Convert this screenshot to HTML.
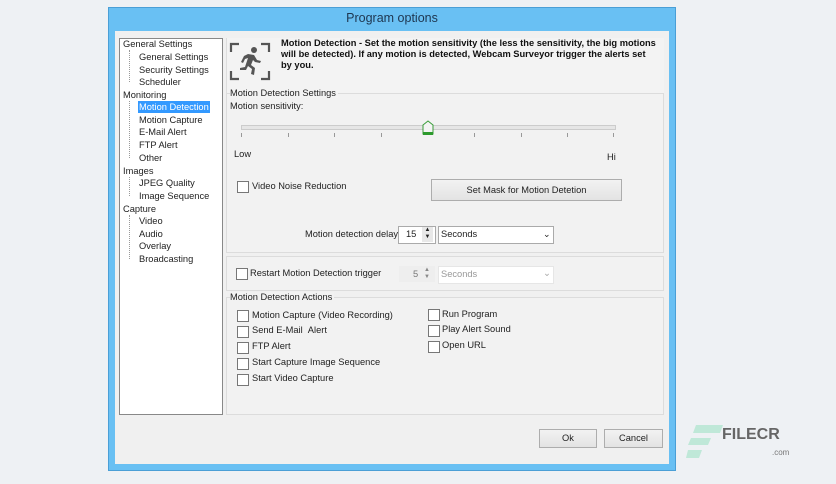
<!DOCTYPE html>
<html><head><meta charset="utf-8"><style>
body{margin:0;width:836px;height:484px;background:#eef1f4;position:relative;overflow:hidden;font-family:"Liberation Sans",sans-serif;font-size:9.3px;color:#222}
.a{position:absolute;white-space:nowrap}
.cb{position:absolute;width:10px;height:10px;border:1px solid #777;background:#fff}
.box{position:absolute;border:1px solid #dcdcdc;background:#f2f2f2}
.btn{position:absolute;border:1px solid #adadad;background:linear-gradient(#f2f2f2,#e3e3e3);text-align:center}
.tick{position:absolute;width:1px;height:4px;background:#999;top:133px}
</style></head><body>
<div class="a" style="left:108px;top:7px;width:568px;height:464px;background:#69c0f3;border:1px solid #4a9fd6;box-sizing:border-box"></div>
<div class="a" style="left:108px;top:11px;width:568px;text-align:center;font-size:12.5px;color:#1e3650">Program options</div>
<div class="a" style="left:115px;top:31px;width:554px;height:433px;background:#f0f0f0"></div>
<!-- tree -->
<div class="a" style="left:119px;top:38px;width:104px;height:377px;background:#fff;border:1px solid #888;box-sizing:border-box"></div>
<div class="a" style="left:129px;top:50px;width:1px;height:32px;border-left:1px dotted #999"></div>
<div class="a" style="left:129px;top:101px;width:1px;height:57px;border-left:1px dotted #999"></div>
<div class="a" style="left:129px;top:177px;width:1px;height:19px;border-left:1px dotted #999"></div>
<div class="a" style="left:129px;top:215px;width:1px;height:44px;border-left:1px dotted #999"></div>
<div>
<div class="a" style="left:123px;top:39px">General Settings</div>
<div class="a" style="left:139px;top:52px">General Settings</div>
<div class="a" style="left:139px;top:65px">Security Settings</div>
<div class="a" style="left:139px;top:77px">Scheduler</div>
<div class="a" style="left:123px;top:90px">Monitoring</div>
<div class="a" style="left:138px;top:101px;background:#3399ff;color:#fff;padding:1px 1px;">Motion Detection</div>
<div class="a" style="left:139px;top:115px">Motion Capture</div>
<div class="a" style="left:139px;top:127px">E-Mail Alert</div>
<div class="a" style="left:139px;top:140px">FTP Alert</div>
<div class="a" style="left:139px;top:153px">Other</div>
<div class="a" style="left:123px;top:166px">Images</div>
<div class="a" style="left:139px;top:178px">JPEG Quality</div>
<div class="a" style="left:139px;top:191px">Image Sequence</div>
<div class="a" style="left:123px;top:204px">Capture</div>
<div class="a" style="left:139px;top:216px">Video</div>
<div class="a" style="left:139px;top:229px">Audio</div>
<div class="a" style="left:139px;top:241px">Overlay</div>
<div class="a" style="left:139px;top:254px">Broadcasting</div>
</div>
<!-- header -->
<div class="a" style="left:226px;top:38px;width:437px;height:212px;background:#f3f3f3;border-left:1px solid #ddd"></div>
<svg class="a" style="left:229px;top:41px" width="44" height="42" viewBox="0 0 44 42" fill="none" stroke="#555" stroke-width="2.2">
<path d="M2 11V3h8M32 3h8v8M2 30v8h8M32 38h8v-8"/>
<g fill="#555" stroke="none"><circle cx="25" cy="9" r="3"/><path d="M19 13l6 1 3 5 4 1-1 2-5-1-2-2-2 5 4 3-1 7-3-1 1-5-4-3-2 4-6 0 0-2 5-1 3-9-3 1-2 4-2-1 3-6z"/></g>
</svg>
<div class="a" style="left:281px;top:38px;font-weight:bold;font-size:9.3px;line-height:11px;color:#111">Motion Detection - Set the motion sensitivity (the less the sensitivity, the big motions<br>will be detected). If any motion is detected, Webcam Surveyor trigger the alerts set<br>by you.</div>
<div class="box" style="left:226px;top:93px;width:436px;height:158px"></div>
<div class="a" style="left:230px;top:88px;background:#f3f3f3;padding-right:2px">Motion Detection Settings</div>
<div class="a" style="left:230px;top:101px">Motion sensitivity:</div>
<div class="a" style="left:241px;top:125px;width:373px;height:3px;background:#e6e6e6;border:1px solid #ccc"></div>
<div class="tick" style="left:241px"></div><div class="tick" style="left:288px"></div><div class="tick" style="left:334px"></div><div class="tick" style="left:381px"></div><div class="tick" style="left:474px"></div><div class="tick" style="left:521px"></div><div class="tick" style="left:567px"></div><div class="tick" style="left:613px"></div>
<svg class="a" style="left:422px;top:120px" width="12" height="18"><path d="M1 5l5-4 5 4v9H1z" fill="#f4f4f4" stroke="#3a9d3a"/><rect x="1" y="12" width="10" height="3" fill="#2c9a2c"/></svg>
<div class="a" style="left:234px;top:149px">Low</div>
<div class="a" style="left:607px;top:152px">Hi</div>
<div class="cb" style="left:237px;top:181px"></div>
<div class="a" style="left:252px;top:181px">Video Noise Reduction</div>
<div class="btn" style="left:431px;top:179px;width:189px;height:20px;line-height:20px">Set Mask for Motion Detetion</div>
<div class="a" style="left:305px;top:229px">Motion detection delay:</div>
<div class="a" style="left:398px;top:226px;width:36px;height:16px;background:#fff;border:1px solid #aaa"></div>
<div class="a" style="left:406px;top:229px">15</div>
<div class="a" style="left:422px;top:227px;width:11px;height:15px;background:#e8e8e8;font-size:6px;line-height:7px;text-align:center">▲<br>▼</div>
<div class="a" style="left:438px;top:226px;width:114px;height:16px;background:#fff;border:1px solid #aaa"></div>
<div class="a" style="left:441px;top:229px">Seconds</div>
<div class="a" style="left:543px;top:229px;font-size:9px">⌄</div>
<!-- restart -->
<div class="box" style="left:226px;top:256px;width:436px;height:33px"></div>
<div class="cb" style="left:236px;top:268px"></div>
<div class="a" style="left:250px;top:268px">Restart Motion Detection trigger</div>
<div class="a" style="left:399px;top:266px;width:36px;height:16px;background:#eee"></div>
<div class="a" style="left:413px;top:269px;color:#777">5</div>
<div class="a" style="left:424px;top:267px;font-size:6px;line-height:7px;color:#888">▲<br>▼</div>
<div class="a" style="left:438px;top:266px;width:114px;height:16px;background:#fff;border:1px solid #e6e6e6"></div>
<div class="a" style="left:441px;top:269px;color:#999">Seconds</div>
<div class="a" style="left:543px;top:268px;color:#aaa">⌄</div>
<!-- actions -->
<div class="box" style="left:226px;top:297px;width:436px;height:116px"></div>
<div class="a" style="left:230px;top:292px;background:#f2f2f2;padding-right:2px">Motion Detection Actions</div>
<div class="cb" style="left:237px;top:310px"></div><div class="a" style="left:252px;top:310px">Motion Capture (Video Recording)</div>
<div class="cb" style="left:237px;top:326px"></div><div class="a" style="left:252px;top:325px">Send E-Mail &nbsp;Alert</div>
<div class="cb" style="left:237px;top:342px"></div><div class="a" style="left:252px;top:341px">FTP Alert</div>
<div class="cb" style="left:237px;top:358px"></div><div class="a" style="left:252px;top:357px">Start Capture Image Sequence</div>
<div class="cb" style="left:237px;top:374px"></div><div class="a" style="left:252px;top:373px">Start Video Capture</div>
<div class="cb" style="left:428px;top:309px"></div><div class="a" style="left:442px;top:309px">Run Program</div>
<div class="cb" style="left:428px;top:325px"></div><div class="a" style="left:442px;top:324px">Play Alert Sound</div>
<div class="cb" style="left:428px;top:341px"></div><div class="a" style="left:442px;top:340px">Open URL</div>
<div class="btn" style="left:539px;top:429px;width:56px;height:17px;line-height:17px">Ok</div>
<div class="btn" style="left:604px;top:429px;width:57px;height:17px;line-height:17px">Cancel</div>
<!-- logo -->
<svg class="a" style="left:686px;top:424px" width="40" height="36"><path d="M10 1h27l-3 8H7z M5 14h20l-3 7H2z M2 26h14l-3 8H0z" fill="#bfe8d8"/></svg>
<div class="a" style="left:722px;top:426px;font-size:16px;font-weight:bold;color:#666">FILECR</div>
<div class="a" style="left:772px;top:448px;font-size:8px;color:#777">.com</div>
</body></html>
